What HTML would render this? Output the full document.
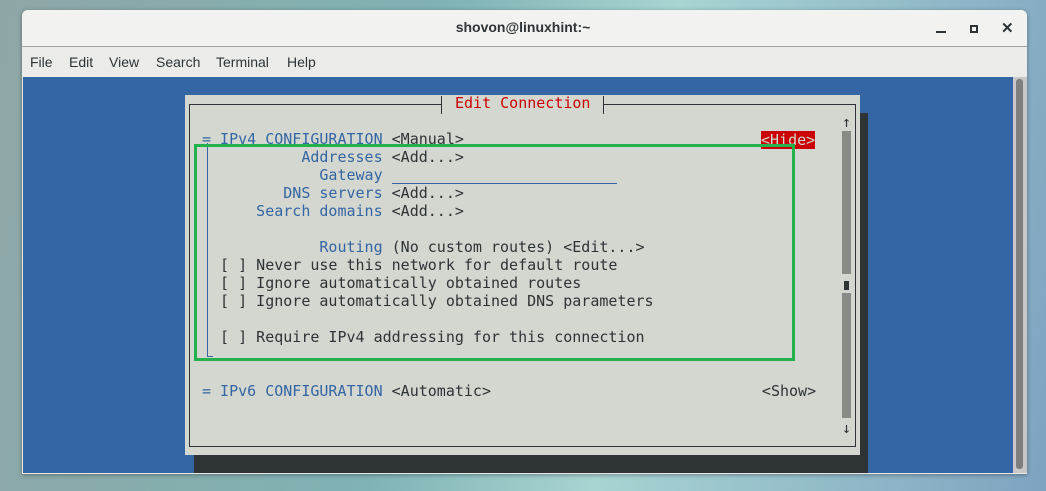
<!DOCTYPE html>
<html><head><meta charset="utf-8"><style>
*{margin:0;padding:0;box-sizing:border-box}
body{width:1046px;height:491px;overflow:hidden;position:relative;background:linear-gradient(100deg,#8fa6a6 0%,#7fb3b4 40%,#a8d4d2 60%,#7ea3c0 100%);font-family:"Liberation Sans",sans-serif}
.abs{position:absolute}
.win{left:22px;top:10px;width:1005px;height:464px;background:#e8e8e7;border-radius:6px 6px 0 0;box-shadow:0 1px 4px rgba(0,0,0,.35)}
.title{left:22px;top:10px;width:1005px;height:37px;background:#f2f2f1;border-radius:6px 6px 0 0;border-bottom:1px solid #a0a0a0}
.menu{left:22px;top:47px;width:1005px;height:30px;background:#ebebea}
.menu span{position:absolute;top:7px;font-size:14px;color:#2e3436}
.term{left:23px;top:77px;width:990px;height:396px;background:#3465a4}
.sb{left:1013px;top:77px;width:14px;height:396px;background:#c8c8c8}
.mono{font-family:"DejaVu Sans Mono","Liberation Mono",monospace;font-size:15px;white-space:pre;line-height:18px;color:#2e3436}
.b{color:#3465a4}
</style></head><body>
<div class="abs win"></div>
<div class="abs title"></div>
<div class="abs" style="left:0;top:19px;width:1046px;text-align:center;font-size:14px;font-weight:bold;color:#2e3436">shovon@linuxhint:~</div>
<div class="abs" style="left:936px;top:31px;width:10px;height:2px;background:#2e3436"></div>
<div class="abs" style="left:970px;top:25px;width:8px;height:8px;border:2px solid #2e3436"></div>
<div class="abs" style="left:1001px;top:19px;font-size:15px;font-weight:bold;color:#2e3436">✕</div>
<div class="abs menu">
<span style="left:8px">File</span><span style="left:47px">Edit</span><span style="left:87px">View</span><span style="left:134px">Search</span><span style="left:194px">Terminal</span><span style="left:265px">Help</span>
</div>
<div class="abs term"></div>
<div class="abs sb"></div>
<div class="abs" style="left:1016px;top:79px;width:7px;height:390px;background:#7f7f7f;border-radius:3px"></div>
<div class="abs" style="left:194px;top:113px;width:674px;height:360px;background:#2e3436"></div>
<div class="abs" style="left:185px;top:95px;width:675px;height:360px;background:#d3d7cf"></div>
<div class="abs" style="left:189px;top:104px;width:667px;height:343px;border:1px solid #2e3436"></div>
<div class="abs" style="left:441px;top:96px;width:163px;height:18px;background:#d3d7cf;border-left:1px solid #2e3436;border-right:1px solid #2e3436"></div>
<div class="abs mono" style="left:455px;top:94px;color:#cc0000">Edit Connection</div>
<div class="abs mono" style="left:842px;top:113px">↑</div>
<div class="abs" style="left:842px;top:131px;width:9px;height:143px;background:#888a85"></div>
<div class="abs" style="left:844px;top:281px;width:5px;height:9px;background:#2e3436"></div>
<div class="abs" style="left:842px;top:293px;width:9px;height:125px;background:#888a85"></div>
<div class="abs mono" style="left:842px;top:419px">↓</div>
<div class="abs mono" style="left:202px;top:130px"><span class="b">= IPv4 CONFIGURATION</span> &lt;Manual&gt;
<span class="b">           Addresses</span> &lt;Add...&gt;
<span class="b">             Gateway</span>
<span class="b">         DNS servers</span> &lt;Add...&gt;
<span class="b">      Search domains</span> &lt;Add...&gt;

<span class="b">             Routing</span> (No custom routes) &lt;Edit...&gt;
  [ ] Never use this network for default route
  [ ] Ignore automatically obtained routes
  [ ] Ignore automatically obtained DNS parameters

  [ ] Require IPv4 addressing for this connection


<span class="b">= IPv6 CONFIGURATION</span> &lt;Automatic&gt;                              &lt;Show&gt;</div>
<div class="abs" style="left:392px;top:183px;width:225px;height:1px;background:#3465a4"></div>
<div class="abs" style="left:207px;top:143px;width:1px;height:214px;background:#3465a4"></div>
<div class="abs" style="left:207px;top:356px;width:6px;height:1px;background:#3465a4"></div>
<div class="abs mono" style="left:761px;top:131px;background:#cc0000;color:#d3d7cf;height:18px">&lt;Hide&gt;</div>
<div class="abs" style="left:194px;top:144px;width:601px;height:217px;border:3px solid #22b14c"></div>
</body></html>
